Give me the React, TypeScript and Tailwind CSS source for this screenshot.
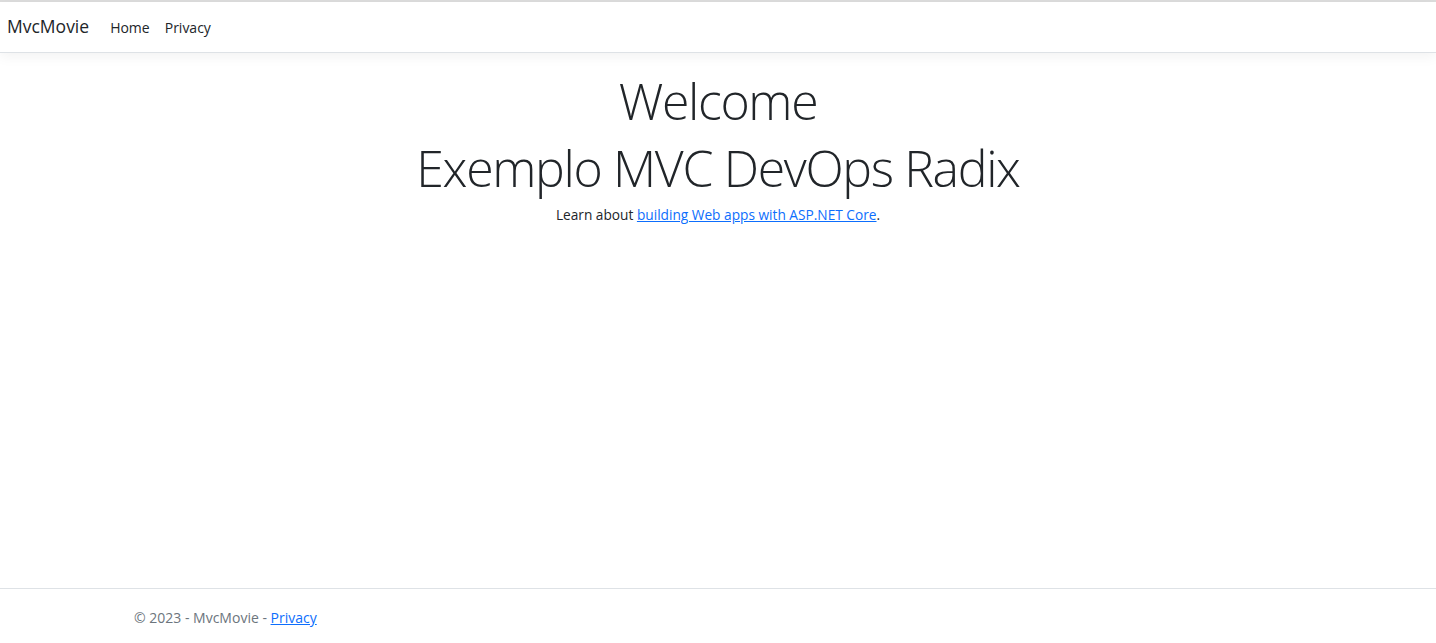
import React from 'react'

function NavBar() {
  return (
    <header className="border-t-2 border-[#dcdcdc]">
      <nav className="bg-white h-[51px] flex items-center border-b border-[#dee2e6] shadow-[0_4px_12px_rgba(0,0,0,0.05)]">
        <a className="ml-[7px] mr-[21px] text-[17.5px] text-[#212529] leading-none cursor-pointer">MvcMovie</a>
        <a className="text-[14px] text-[#212529] cursor-pointer">Home</a>
        <a className="ml-[15px] text-[14px] text-[#212529] cursor-pointer">Privacy</a>
      </nav>
    </header>
  )
}

export default function App() {
  return (
    <div className="min-h-[643px] flex flex-col bg-white text-[#212529] font-['Open_Sans',sans-serif]">
      <NavBar />
      <main className="flex-1 text-center pt-[15px]">
        <h1 className="text-[50px] font-light leading-[67px] tracking-[-1.35px]">
          Welcome
          <br />
          Exemplo MVC DevOps Radix
        </h1>
        <p className="text-[13.7px] mt-[3px]">
          Learn about{' '}
          <a className="text-[#0d6efd] underline cursor-pointer">building Web apps with ASP.NET Core</a>.
        </p>
      </main>
      <footer className="border-t border-[#dee2e6] h-[55px] mt-auto">
        <div className="pl-[134px] leading-[58px] text-[14px] text-[#6c757d]">
          © 2023 - MvcMovie - <a className="text-[#0d6efd] underline cursor-pointer">Privacy</a>
        </div>
      </footer>
    </div>
  )
}
